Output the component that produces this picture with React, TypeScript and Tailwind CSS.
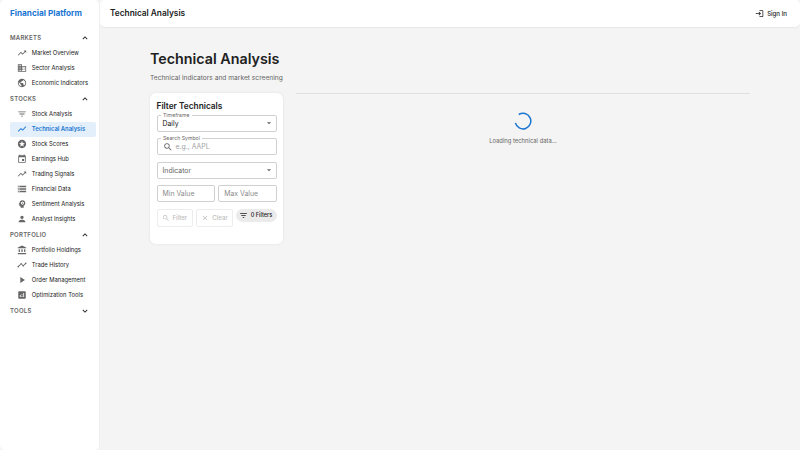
import type { ReactNode } from "react";
import type { IconType } from "react-icons";
import {
  MdTrendingUp, MdBusiness, MdPublic, MdFilterList, MdShowChart, MdStars, MdEvent, MdStorage,
  MdPsychology, MdPerson, MdAccountBalance, MdTimeline, MdPlayArrow, MdAnalytics, MdExpandLess,
  MdExpandMore, MdSearch, MdClear, MdLogin, MdArrowDropDown,
} from "react-icons/md";

type Item = { label: string; icon: IconType; active?: boolean };
type Section = { title: string; open: boolean; items: Item[] };

const sections: Section[] = [
  {
    title: "MARKETS",
    open: true,
    items: [
      { label: "Market Overview", icon: MdTrendingUp },
      { label: "Sector Analysis", icon: MdBusiness },
      { label: "Economic Indicators", icon: MdPublic },
    ],
  },
  {
    title: "STOCKS",
    open: true,
    items: [
      { label: "Stock Analysis", icon: MdFilterList },
      { label: "Technical Analysis", icon: MdShowChart, active: true },
      { label: "Stock Scores", icon: MdStars },
      { label: "Earnings Hub", icon: MdEvent },
      { label: "Trading Signals", icon: MdTrendingUp },
      { label: "Financial Data", icon: MdStorage },
      { label: "Sentiment Analysis", icon: MdPsychology },
      { label: "Analyst Insights", icon: MdPerson },
    ],
  },
  {
    title: "PORTFOLIO",
    open: true,
    items: [
      { label: "Portfolio Holdings", icon: MdAccountBalance },
      { label: "Trade History", icon: MdTimeline },
      { label: "Order Management", icon: MdPlayArrow },
      { label: "Optimization Tools", icon: MdAnalytics },
    ],
  },
  { title: "TOOLS", open: false, items: [] },
];

function NavItem({ label, icon: Icon, active }: Item) {
  return (
    <a
      className={
        "flex h-[15px] items-center rounded-[2px] pl-[6.5px] whitespace-nowrap " +
        (active
          ? "bg-[#e3effb] text-[5.9px] font-semibold text-[#1976d2]"
          : "text-[5.85px] font-normal text-[#212121]")
      }
    >
      <Icon className={"mr-[5.3px] size-[10px] shrink-0 " + (active ? "text-[#1976d2]" : "text-[#666]")} />
      <span className="pt-px">{label}</span>
    </a>
  );
}

function Sidebar() {
  return (
    <aside className="h-full w-[100px] shrink-0 rounded-[5px] border-r border-[#f0f0f0] bg-white">
      <div className="flex h-[29.7px] items-center pb-[3px] pl-[10px] text-[8.2px] font-bold whitespace-nowrap text-[#1976d2]">
        Financial Platform
      </div>
      <nav className="pr-[3px] pl-[10px]">
        {sections.map((s) => (
          <div key={s.title}>
            <div className="flex h-4 items-center justify-between pr-[6px] text-[6px] font-semibold tracking-[0.25px] text-[#666]">
              {s.title}
              {s.open ? (
                <MdExpandLess className="size-[10px] text-[#212121]" />
              ) : (
                <MdExpandMore className="size-[10px] text-[#212121]" />
              )}
            </div>
            {s.items.map((i) => (
              <NavItem key={i.label} {...i} />
            ))}
          </div>
        ))}
      </nav>
    </aside>
  );
}

function Field({ label, children }: { label?: string; children: ReactNode }) {
  return (
    <div className="relative flex h-[17px] min-w-0 flex-1 items-center rounded-[2px] border border-[#d0d0d0] px-[5px] text-[6.9px] text-[#212121]">
      {label && (
        <span className="absolute -top-[4px] left-[3.5px] bg-white px-[2px] text-[5.1px] leading-[7px] tracking-[0.05px] whitespace-nowrap text-[#666]">
          {label}
        </span>
      )}
      {children}
    </div>
  );
}

function FilterCard() {
  return (
    <section className="h-[151px] w-[133px] shrink-0 rounded-[6px] bg-white pr-[6px] pl-[6.5px] pt-[8px] shadow-[0_0_3px_rgba(0,0,0,0.08)]">
      <h2 className="h-[14px] text-[8.3px] leading-[11px] font-semibold text-[#212121]">Filter Technicals</h2>
      <div className="flex">
        <Field label="Timeframe">
          <span className="pt-[2px]">Daily</span>
          <MdArrowDropDown className="-mr-[3px] ml-auto size-[10px] text-[#666]" />
        </Field>
      </div>
      <div className="mt-[6.5px] flex">
        <Field label="Search Symbol">
          <MdSearch className="mr-[3px] size-[10px] text-[#666]" />
          <span className="pt-px text-[#a3a3a3]">e.g., AAPL</span>
        </Field>
      </div>
      <div className="mt-[6.5px] flex">
        <Field>
          <span className="pt-[2px] text-[#666]">Indicator</span>
          <MdArrowDropDown className="-mr-[3px] ml-auto size-[10px] text-[#666]" />
        </Field>
      </div>
      <div className="mt-[6.5px] flex gap-[3px]">
        <Field><span className="pt-px text-[#8c8c8c]">Min Value</span></Field>
        <Field><span className="pt-px text-[#8c8c8c]">Max Value</span></Field>
      </div>
      <div className="mt-[6.5px] flex items-start gap-[3px] text-[6.1px] font-medium text-[#bdbdbd]">
        <div className="flex h-[18px] w-[37px] items-center rounded-[2px] border border-[#ededed] pl-[4px]">
          <MdSearch className="mr-[3px] size-[8px]" />
          Filter
        </div>
        <div className="flex h-[18px] w-[37px] items-center rounded-[2px] border border-[#ededed] pl-[4px]">
          <MdClear className="mr-[3px] size-[8px]" />
          Clear
        </div>
        <div className="flex h-[13px] w-[41px] items-center rounded-full bg-[#ebebeb] pl-[3px] text-[5.6px] whitespace-nowrap text-[#212121]">
          <MdFilterList className="mr-[2.5px] size-[9px] shrink-0" />
          0 Filters
        </div>
      </div>
    </section>
  );
}

export default function App() {
  return (
    <div className="flex h-[450px] w-[800px] overflow-hidden bg-[#f4f4f4] font-['Inter',sans-serif]">
      <Sidebar />
      <div className="flex min-w-0 flex-1 flex-col">
        <header className="flex h-[26.5px] shrink-0 items-center justify-between rounded-[5px] bg-white pr-[13px] pl-[10px] shadow-[0_1px_1px_rgba(0,0,0,0.05)]">
          <span className="text-[8.3px] font-semibold text-[#212121]">Technical Analysis</span>
          <button className="flex items-center gap-[3px] text-[6.1px] font-medium text-[#212121]">
            <MdLogin className="size-[9px]" />
            Sign In
          </button>
        </header>
        <main className="px-[50px] pt-[22px]">
          <h1 className="text-[14.3px] leading-[20px] font-semibold text-[#212121]">Technical Analysis</h1>
          <p className="mt-[4px] h-[20px] text-[6.65px] leading-[11px] text-[#666]">
            Technical indicators and market screening
          </p>
          <div className="flex gap-[13px]">
            <FilterCard />
            <div className="flex flex-1 flex-col items-center border-t border-[#e0e0e0]">
              <svg viewBox="0 0 18 18" className="mt-[18px] size-[18px]" fill="none" stroke="#1976d2" strokeWidth="1.5">
                <path d="M4.8 2.5 A7.8 7.8 0 1 1 1.4 10.9" />
              </svg>
              <div className="mt-[6px] text-[5.85px] leading-[9px] text-[#666]">Loading technical data...</div>
            </div>
          </div>
        </main>
      </div>
    </div>
  );
}
